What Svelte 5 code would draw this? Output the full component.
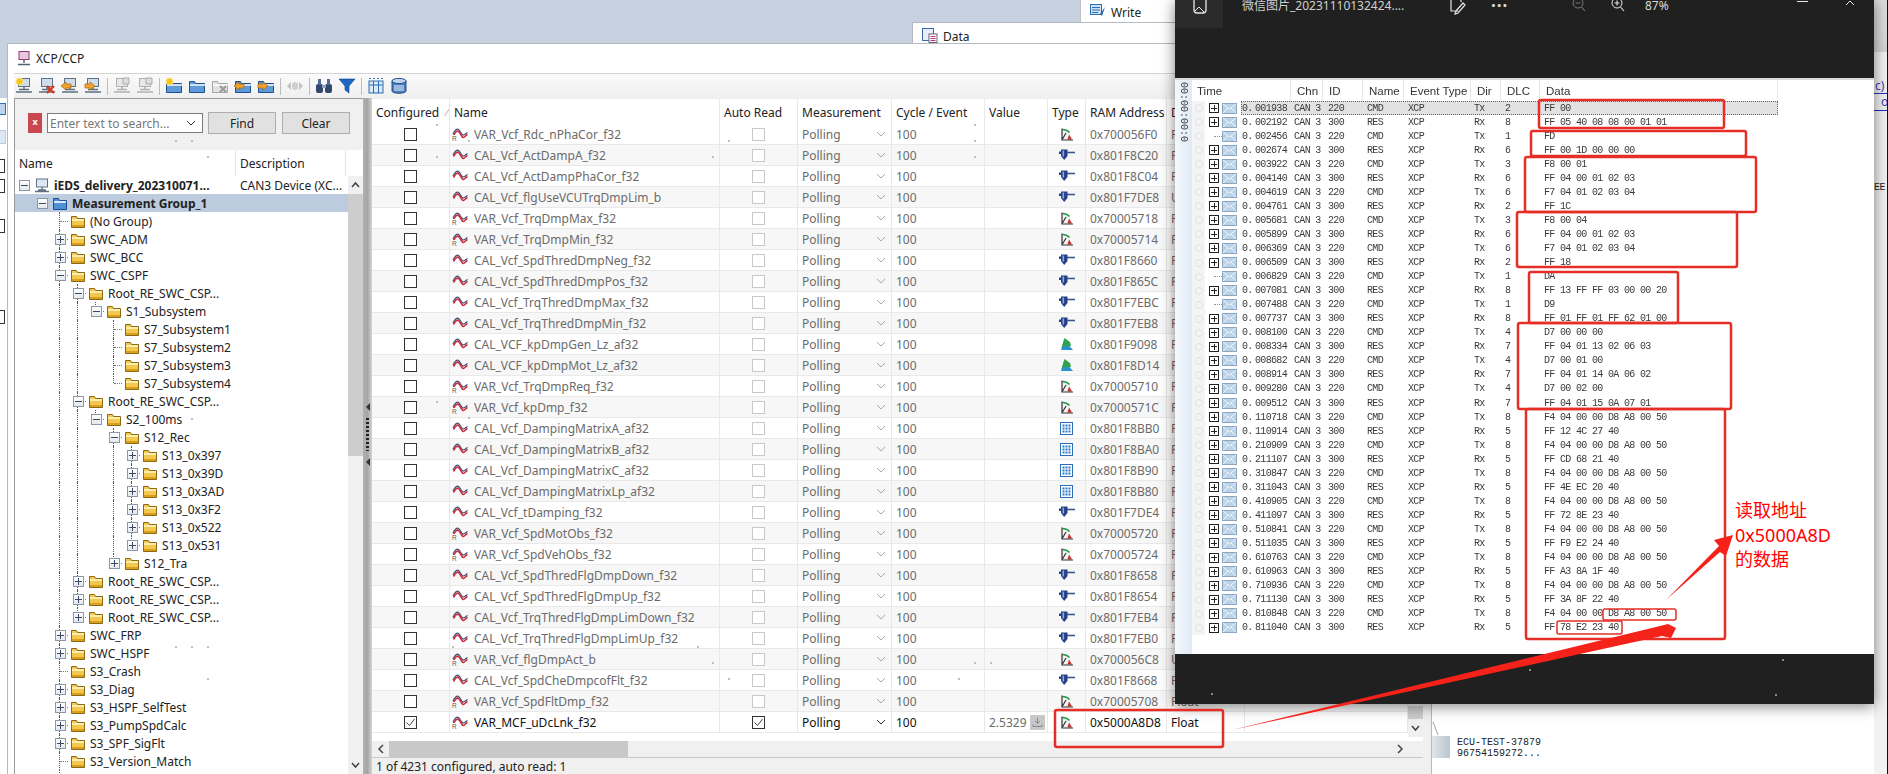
<script lang="ts">
	// tree on the left: [label, depth, expander]
	const treeRaw: [string, number, string][] = [
		['iEDS_delivery_202310071...', 0, '-'],
		['Measurement Group_1', 1, '-'],
		['(No Group)', 2, ''],
		['SWC_ADM', 2, '+'],
		['SWC_BCC', 2, '+'],
		['SWC_CSPF', 2, '-'],
		['Root_RE_SWC_CSP...', 3, '-'],
		['S1_Subsystem', 4, '-'],
		['S7_Subsystem1', 5, ''],
		['S7_Subsystem2', 5, ''],
		['S7_Subsystem3', 5, ''],
		['S7_Subsystem4', 5, ''],
		['Root_RE_SWC_CSP...', 3, '-'],
		['S2_100ms', 4, '-'],
		['S12_Rec', 5, '-'],
		['S13_0x397', 6, '+'],
		['S13_0x39D', 6, '+'],
		['S13_0x3AD', 6, '+'],
		['S13_0x3F2', 6, '+'],
		['S13_0x522', 6, '+'],
		['S13_0x531', 6, '+'],
		['S12_Tra', 5, '+'],
		['Root_RE_SWC_CSP...', 3, '+'],
		['Root_RE_SWC_CSP...', 3, '+'],
		['Root_RE_SWC_CSP...', 3, '+'],
		['SWC_FRP', 2, '+'],
		['SWC_HSPF', 2, '+'],
		['S3_Crash', 2, ''],
		['S3_Diag', 2, '+'],
		['S3_HSPF_SelfTest', 2, '+'],
		['S3_PumpSpdCalc', 2, '+'],
		['S3_SPF_SigFlt', 2, '+'],
		['S3_Version_Match', 2, ''],
		['', 2, '']
	];

	function hasNext(i: number, level: number) {
		for (let j = i + 1; j < treeRaw.length; j++) {
			if (treeRaw[j][1] < level) return false;
			if (treeRaw[j][1] === level) return true;
		}
		return false;
	}

	const tree = treeRaw.map(([label, depth, exp], i) => ({
		label,
		depth,
		exp,
		levels: Array.from({ length: depth }, (_, l) => l >= 2 && hasNext(i, l)),
		next: depth >= 2 && hasNext(i, depth)
	}));

	const signals: [string, string, string][] = [
		['VAR_Vcf_Rdc_nPhaCor_f32', '0x700056F0', 'Float'],
		['CAL_Vcf_ActDampA_f32', '0x801F8C20', 'Float'],
		['CAL_Vcf_ActDampPhaCor_f32', '0x801F8C04', 'Float'],
		['CAL_Vcf_flgUseVCUTrqDmpLim_b', '0x801F7DE8', 'UByte'],
		['VAR_Vcf_TrqDmpMax_f32', '0x70005718', 'Float'],
		['VAR_Vcf_TrqDmpMin_f32', '0x70005714', 'Float'],
		['CAL_Vcf_SpdThredDmpNeg_f32', '0x801F8660', 'Float'],
		['CAL_Vcf_SpdThredDmpPos_f32', '0x801F865C', 'Float'],
		['CAL_Vcf_TrqThredDmpMax_f32', '0x801F7EBC', 'Float'],
		['CAL_Vcf_TrqThredDmpMin_f32', '0x801F7EB8', 'Float'],
		['CAL_VCF_kpDmpGen_Lz_af32', '0x801F9098', 'Float'],
		['CAL_VCF_kpDmpMot_Lz_af32', '0x801F8D14', 'Float'],
		['VAR_Vcf_TrqDmpReq_f32', '0x70005710', 'Float'],
		['VAR_Vcf_kpDmp_f32', '0x7000571C', 'Float'],
		['CAL_Vcf_DampingMatrixA_af32', '0x801F8BB0', 'Float'],
		['CAL_Vcf_DampingMatrixB_af32', '0x801F8BA0', 'Float'],
		['CAL_Vcf_DampingMatrixC_af32', '0x801F8B90', 'Float'],
		['CAL_Vcf_DampingMatrixLp_af32', '0x801F8B80', 'Float'],
		['CAL_Vcf_tDamping_f32', '0x801F7DE4', 'Float'],
		['VAR_Vcf_SpdMotObs_f32', '0x70005720', 'Float'],
		['VAR_Vcf_SpdVehObs_f32', '0x70005724', 'Float'],
		['CAL_Vcf_SpdThredFlgDmpDown_f32', '0x801F8658', 'Float'],
		['CAL_Vcf_SpdThredFlgDmpUp_f32', '0x801F8654', 'Float'],
		['CAL_Vcf_TrqThredFlgDmpLimDown_f32', '0x801F7EB4', 'Float'],
		['CAL_Vcf_TrqThredFlgDmpLimUp_f32', '0x801F7EB0', 'Float'],
		['VAR_Vcf_flgDmpAct_b', '0x700056C8', 'UByte'],
		['CAL_Vcf_SpdCheDmpcofFlt_f32', '0x801F8668', 'Float'],
		['VAR_Vcf_SpdFltDmp_f32', '0x70005708', 'Float'],
		['VAR_MCF_uDcLnk_f32', '0x5000A8D8', 'Float']
	];

	function typeOf(name: string) {
		if (name.startsWith('VAR')) return 'gauge';
		if (name.includes('_Lz_')) return 'map';
		if (name.includes('Matrix')) return 'matrix';
		return 'pin';
	}

	// trace picture rows: time, dlc, data, has expander. Requests and replies alternate.
	const read = 'F4 04 00 00 D8 A8 00 50';
	const trace: [string, number, string, boolean?][] = [
		['001938', 2, 'FF 00'],
		['002192', 8, 'FF 05 40 08 08 00 01 01'],
		['002456', 1, 'FD', false],
		['002674', 6, 'FF 00 1D 00 00 00'],
		['003922', 3, 'F8 00 01'],
		['004140', 6, 'FF 04 00 01 02 03'],
		['004619', 6, 'F7 04 01 02 03 04'],
		['004761', 2, 'FF 1C'],
		['005681', 3, 'F8 00 04'],
		['005899', 6, 'FF 04 00 01 02 03'],
		['006369', 6, 'F7 04 01 02 03 04'],
		['006509', 2, 'FF 18'],
		['006829', 1, 'DA', false],
		['007081', 8, 'FF 13 FF FF 03 00 00 20'],
		['007488', 1, 'D9', false],
		['007737', 8, 'FF 01 FF 01 FF 62 01 00'],
		['008100', 4, 'D7 00 00 00'],
		['008334', 7, 'FF 04 01 13 02 06 03'],
		['008682', 4, 'D7 00 01 00'],
		['008914', 7, 'FF 04 01 14 0A 06 02'],
		['009280', 4, 'D7 00 02 00'],
		['009512', 7, 'FF 04 01 15 0A 07 01'],
		['110718', 8, read],
		['110914', 5, 'FF 12 4C 27 40'],
		['210909', 8, read],
		['211107', 5, 'FF CD 68 21 40'],
		['310847', 8, read],
		['311043', 5, 'FF 4E EC 20 40'],
		['410905', 8, read],
		['411097', 5, 'FF 72 8E 23 40'],
		['510841', 8, read],
		['511035', 5, 'FF F9 E2 24 40'],
		['610763', 8, read],
		['610963', 5, 'FF A3 8A 1F 40'],
		['710936', 8, read],
		['711130', 5, 'FF 3A 8F 22 40'],
		['810848', 8, read],
		['811040', 5, 'FF 78 E2 23 40']
	];

	// x, y, w, h of the hand drawn boxes
	const boxes = [
		[1539, 100, 185, 28],
		[1531, 131, 215, 25],
		[1525, 157, 231, 55],
		[1517, 212, 220, 55],
		[1529, 272, 149, 51],
		[1518, 323, 213, 86],
		[1526, 409, 199, 230],
		[1603, 609, 73, 11],
		[1557, 621, 65, 13],
		[1055, 710, 168, 37]
	];

	// stray specks that the screenshot carries
	const specks = [
		[437, 125], [437, 157], [176, 141], [192, 141], [208, 157], [469, 141], [729, 141], [713, 157],
		[192, 419], [437, 402], [469, 418], [176, 647], [192, 647], [208, 647], [208, 679],
		[975, 125], [975, 141], [975, 157], [453, 647], [698, 647], [713, 663], [729, 679],
		[975, 663], [991, 663], [959, 679], [1212, 694], [1530, 670], [1776, 695], [1783, 660]
	];

	const toolbar = [
		['new-net', 'del-net', 'in-net', 'out-net'],
		['dim-net', 'dim-net'],
		['new-folder', 'folder', 'del-folder', 'in-folder', 'out-folder'],
		['dim-arrow'],
		['find', 'funnel'],
		['columns', 'db']
	];
</script>

{#snippet chevron(dark: boolean)}
	<svg class="chev" width="10" height="6" viewBox="0 0 10 6"><path d="M1 1l4 4 4-4" fill="none" stroke={dark ? '#333' : '#a8a8a8'} stroke-width="1" /></svg>
{/snippet}

{#snippet folderIcon()}
	<svg width="14" height="13" viewBox="0 0 14 13">
		<path d="M.5 12.500V1.500h5l1 2h7v9z" fill="#f4c84f" stroke="#8a6a14" />
		<path d="M1 4h12v2H1z" fill="#fdeeb0" />
		<path d="M1 10h12v2H1z" fill="#d99e1c" />
	</svg>
{/snippet}

{#snippet netShape(body: string, edge: string)}
	<rect x="3.500" y="1.500" width="11" height="8" fill={body} stroke={edge} />
	<path d="M9 9.500v3M1 15h16M4 12.500h10" stroke={edge} stroke-width="1.500" />
{/snippet}

{#snippet folderShape(body: string, edge: string)}
	<path d="M1.500 15.500V4.500h5l1 2h9v9z" fill={body} stroke={edge} />
	<path d="M2 7h15v2H2z" fill="#fff" opacity=".7" />
{/snippet}

{#snippet tool(kind: string)}
	<svg class="tool" width="18" height="18" viewBox="0 0 18 18">
		{#if kind.endsWith('net')}
			{#if kind === 'dim-net'}
				{@render netShape('#e8e8e8', '#b0b0b0')}
				<path d="M10 1h6v6h-6z" fill="#ddd" stroke="#aaa" />
			{:else}
				{@render netShape('#cfdcea', '#5f7284')}
			{/if}
		{:else if kind.endsWith('folder') || kind === 'folder'}
			{#if kind === 'del-folder'}
				{@render folderShape('#e2e2e2', '#a6a6a6')}
			{:else}
				{@render folderShape('#5f9bd8', '#1e4f8c')}
			{/if}
		{/if}
		{#if kind.startsWith('new')}
			<circle cx="4.500" cy="4.500" r="3.500" fill="#f7c516" stroke="#fbe58a" />
		{:else if kind === 'del-net'}
			<path d="M9 9l7 7m0-7l-7 7" stroke="#d8391f" stroke-width="2.400" />
		{:else if kind === 'del-folder'}
			<path d="M9 9l6 6m0-6l-6 6" stroke="#9a9a9a" stroke-width="2" />
		{:else if kind.startsWith('in')}
			<path d="M0 9l5-4v2h5v4H5v2z" fill="#f1a32e" stroke="#a8660a" stroke-width=".7" />
		{:else if kind.startsWith('out')}
			<path d="M11 9L6 5v2H1v4h5v2z" fill="#f1a32e" stroke="#a8660a" stroke-width=".7" />
		{:else if kind === 'dim-arrow'}
			<path d="M1 9l4-4v8zM17 9l-4-4v8z" fill="#c4c4c4" /><rect x="6" y="5" width="6" height="8" rx="3" fill="#d0d0d0" />
		{:else if kind === 'find'}
			<rect x="1" y="7" width="7" height="9" rx="2" fill="#30476b" />
			<rect x="10" y="7" width="7" height="9" rx="2" fill="#30476b" />
			<rect x="3" y="2" width="3" height="6" fill="#4f6a94" />
			<rect x="12" y="2" width="3" height="6" fill="#4f6a94" />
			<rect x="7" y="8" width="4" height="3" fill="#8fa4c4" />
		{:else if kind === 'funnel'}
			<path d="M1 2h16l-6 7v7l-4-3V9z" fill="#1c68c4" stroke="#0e3f80" stroke-width=".6" />
		{:else if kind === 'columns'}
			<rect x="2" y="4" width="14" height="12" fill="#dce9f7" stroke="#2f6fb4" />
			<path d="M6.500 4v12M11.500 4v12M2 8h14" stroke="#2f6fb4" />
			<path d="M2 1.500h14" stroke="#2f6fb4" stroke-dasharray="2 2" />
		{:else if kind === 'db'}
			<path d="M2 4v10c0 3 14 3 14 0V4z" fill="#4a7fbd" stroke="#234f88" />
			<ellipse cx="9" cy="4" rx="7" ry="2.600" fill="#bcd5ee" stroke="#234f88" />
			<rect x="4" y="8" width="10" height="6" fill="#cfe0f2" opacity=".6" />
		{/if}
	</svg>
{/snippet}

{#snippet wave(isVar: boolean)}
	<svg class="wave" width="16" height="14" viewBox="0 0 16 14">
		<path d="M1 7C3 3 5 1 7 3s3 5.500 4.500 5 3-2 4-2.500" fill="none" stroke="#3e4f72" stroke-width="1.200" />
		<path d="M1.500 8.500C3.500 5 5 3 7 5s3 6 4.500 5.500 2.500-2.500 4-3" fill="none" stroke="#c9303f" stroke-width="1.700" />
		{#if isVar}
			<rect x="0" y="8" width="4.500" height="6" fill="#fff" opacity=".9" />
			<text x="0" y="13.500" font-size="6.500" fill="#555" font-family="Liberation Sans, sans-serif">R</text>
		{/if}
	</svg>
{/snippet}

{#snippet typeIcon(kind: string)}
	{#if kind === 'gauge'}
		<svg width="14" height="14" viewBox="0 0 14 14">
			<path d="M2 12.500V2.500a10 10 0 0 1 10 10z" fill="#f4f4f4" />
			<path d="M2.500 2.500a10 10 0 0 1 7 3" fill="none" stroke="#2b9a4a" stroke-width="1.500" />
			<path d="M7.500 12.500l1.500-5 3 5z" fill="#c92c2c" />
			<path d="M2 1.500v11.500h11M2.500 12l3.500-6" fill="none" stroke="#333" stroke-width="1.200" />
		</svg>
	{:else if kind === 'pin'}
		<svg width="16" height="12" viewBox="0 0 16 12">
			<path d="M8 3.500h8" stroke="#3b5a8a" stroke-width="1.600" />
			<path d="M2 .500h6.500v6.500L5.200 11 2 7zM0 2.500h2v2.500H0z" fill="#24408a" />
			<path d="M3.500 1.500h1.600v6H3.500z" fill="#93abd8" />
		</svg>
	{:else if kind === 'map'}
		<svg width="14" height="14" viewBox="0 0 14 14">
			<path d="M1 13L4 3l9 10z" fill="#2b8fd0" />
			<path d="M1.500 11L4.500 1 10 5l1 4-6 0z" fill="#2ea34c" />
		</svg>
	{:else}
		<svg width="13" height="13" viewBox="0 0 13 13">
			<rect x=".5" y=".5" width="12" height="12" fill="#fff" stroke="#2a6fb5" />
			{#each [2.500, 5.500, 8.500] as y}
				{#each [2.500, 5.500, 8.500] as x}
					<rect {x} {y} width="2" height="2" fill="#2a7ac8" />
				{/each}
			{/each}
		</svg>
	{/if}
{/snippet}

<div class="screen">
	<div class="tabband">
		<div class="tab write">
			<svg width="16" height="14" viewBox="0 0 16 14"><rect x=".5" y=".5" width="11" height="10" fill="#cfe0f4" stroke="#2f6fb4" /><path d="M2 3.500h8M2 6h8M2 8.500h6" stroke="#2f6fb4" /><path d="M15 3l-3 9-2-2z" fill="#2c62a8" /></svg>
			Write
		</div>
		<div class="tab data">
			<svg width="16" height="15" viewBox="0 0 16 15"><rect x=".5" y=".5" width="11" height="12" fill="#e6eefa" stroke="#3a6aa8" /><rect x="7" y="6" width="8" height="8.500" fill="#fff" stroke="#666" /><path d="M8.500 8.500h5M8.500 10.500h5M8.500 12.500h5" stroke="#c2308e" /></svg>
			Data
		</div>
	</div>

	<div class="desk">
		<div class="behind">
			<i class="chip"></i>
			<i class="chip pale"></i>
			<b class="mark m1"></b>
			<b class="mark m2"></b>
			<b class="mark m3"></b>
			<b class="mark m4"></b>
		</div>

		<div class="win">
			<div class="wintitle">
				<svg width="14" height="15" viewBox="0 0 14 15"><rect x="2" y=".5" width="10" height="8" fill="#e7c8dc" stroke="#8f3a6c" /><path d="M7 9v3M1 13.500h12" stroke="#506070" stroke-width="1.400" /></svg>
				XCP/CCP
			</div>
			<div class="toolbar">
				{#each toolbar as group, g}
					{#if g > 0}<span class="sep"></span>{/if}
					{#each group as kind}
						{@render tool(kind)}
					{/each}
				{/each}
			</div>

			<div class="panes">
				<section class="left">
					<div class="search">
						<span class="xbtn">x</span>
						<div class="input"><span>Enter text to search...</span>{@render chevron(true)}</div>
						<button class="btn">Find</button>
						<button class="btn">Clear</button>
					</div>
					<div class="treehead">
						<span class="h-name">Name</span>
						<span class="h-desc">Description</span>
					</div>
					<div class="treewrap">
						<div class="tree">
							{#each tree as row, i}
								<div class="node" class:sel={i === 1} class:strong={i < 2}>
									{#each row.levels as on}
										<span class="cell" class:line={on}></span>
									{/each}
									<span class="cell" class:twig={row.depth >= 2} class:last={!row.next}>
										{#if row.exp}
											<span class="box">
												<i class="h"></i>
												{#if row.exp === '+'}<i class="v"></i>{/if}
											</span>
										{/if}
									</span>
									<span class="nodeicon">
										{#if row.depth === 0}
											<svg width="16" height="15" viewBox="0 0 16 15"><rect x="2.500" y="1" width="11" height="8" fill="#dfe8f2" stroke="#5f7284" /><path d="M8 9v3M1 13.500h14M4 12h8" stroke="#5f7284" stroke-width="1.400" /></svg>
										{:else if row.depth === 1}
											<svg width="14" height="13" viewBox="0 0 14 13"><path d="M.5 12.500V1.500h5l1 2h7v9z" fill="#4e90d6" stroke="#1e4f8c" /><path d="M1 4h12v2H1z" fill="#d8e8f8" /></svg>
										{:else}
											{@render folderIcon()}
										{/if}
									</span>
									<span class="label">{row.label}</span>
									{#if i === 0}<span class="desc">CAN3 Device (XC...</span>{/if}
								</div>
							{/each}
						</div>
						<div class="vbar">
							<svg width="15" height="18" viewBox="0 0 15 18"><path d="M4 11l3.500-4 3.500 4" fill="none" stroke="#444" stroke-width="1.500" /></svg>
							<div class="thumb"></div>
							<svg class="down" width="15" height="18" viewBox="0 0 15 18"><path d="M4 7l3.500 4 3.500-4" fill="none" stroke="#444" stroke-width="1.500" /></svg>
						</div>
					</div>
				</section>

				<div class="split">
					<i class="tri"></i>
					<i class="grip"></i>
					<i class="tri"></i>
				</div>

				<section class="grid">
					<div class="head cols">
						<span>Configured<em>⁄</em></span>
						<span>Name</span>
						<span>Auto Read</span>
						<span>Measurement</span>
						<span>Cycle / Event</span>
						<span>Value</span>
						<span>Type</span>
						<span>RAM Address</span>
						<span>Data Type</span>
						<span></span>
					</div>
					<div class="gridbody">
						<div class="rows">
							{#each signals as [name, addr, dtype], i}
								{@const on = i === signals.length - 1}
								<div class="row cols" class:alt={i % 2 === 1} class:on>
									<span class="c-check"><i class="check">{#if on}<svg width="13" height="13" viewBox="0 0 13 13"><path d="M2.500 6.500l3 3 5-6.500" fill="none" stroke="#444" /></svg>{/if}</i></span>
									<span class="c-name">{@render wave(name.startsWith('VAR'))}<span>{name}</span></span>
									<span class="c-check"><i class="check soft">{#if on}<svg width="13" height="13" viewBox="0 0 13 13"><path d="M2.500 6.500l3 3 5-6.500" fill="none" stroke="#444" /></svg>{/if}</i></span>
									<span class="c-poll"><span>Polling</span>{@render chevron(on)}</span>
									<span class="c-num"><span>100</span></span>
									<span class="c-val">
										{#if on}
											<span>2.5329</span>
											<i class="dl"><svg width="11" height="11" viewBox="0 0 11 11"><path d="M5.500 1v5M3 4l2.500 2.500L8 4M1 7.500v2h9v-2" fill="none" stroke="#8a8a8a" /></svg></i>
										{/if}
									</span>
									<span class="c-type">{@render typeIcon(typeOf(name))}</span>
									<span class="c-addr"><span>{addr}</span></span>
									<span class="c-dt"><span>{dtype}</span></span>
									<span></span>
								</div>
							{/each}
						</div>
						<div class="vbar small">
							<div class="thumb2"></div>
							<svg width="15" height="18" viewBox="0 0 15 18"><path d="M4 7l3.500 4 3.500-4" fill="none" stroke="#444" stroke-width="1.500" /></svg>
						</div>
					</div>
					<div class="hbar">
						<svg width="15" height="16" viewBox="0 0 15 16"><path d="M9 4L5 8l4 4" fill="none" stroke="#444" stroke-width="1.500" /></svg>
						<div class="hthumb"></div>
						<svg class="end" width="15" height="16" viewBox="0 0 15 16"><path d="M6 4l4 4-4 4" fill="none" stroke="#444" stroke-width="1.500" /></svg>
					</div>
					<div class="status">1 of 4231 configured, auto read: 1</div>
				</section>

				<section class="side">
					<div class="doc">
						<i class="docicon"></i>
						<span>ECU-TEST-37879<br />96754159272...</span>
					</div>
				</section>
			</div>
		</div>
	</div>

	<div class="edge">
		<div class="edge-link">c)</div>
		<div class="edge-link second">o</div>
		<div class="edge-ee">EE</div>
	</div>

	<div class="viewer">
		<div class="vtop">
			<div class="vtab">
				<svg width="16" height="14" viewBox="0 0 16 14"><path d="M3 0v10a3 3 0 0 0 3 3h6a3 3 0 0 0 3-3V0" fill="none" stroke="#e6e6e6" stroke-width="1.300" /><path d="M4 11l4-4 5 5" fill="none" stroke="#e6e6e6" /></svg>
			</div>
			<span class="vname">微信图片_20231110132424....</span>
			<svg class="v-edit" width="20" height="16" viewBox="0 0 20 16"><path d="M3 0v11h7M13 0v2M8 11l7-8 2 2-7 8-3 1z" fill="none" stroke="#e6e6e6" stroke-width="1.200" /></svg>
			<span class="vdots">···</span>
			<svg class="v-zoomout" width="14" height="14" viewBox="0 0 14 14"><circle cx="6" cy="3" r="5" fill="none" stroke="#777" /><path d="M3.500 3h5M9.500 7l3.500 4" stroke="#777" stroke-width="1.100" /></svg>
			<svg class="v-zoomin" width="14" height="14" viewBox="0 0 14 14"><circle cx="6" cy="3" r="5" fill="none" stroke="#e6e6e6" /><path d="M3.500 3h5M6 .5v5M9.500 7l3.500 4" stroke="#e6e6e6" stroke-width="1.100" /></svg>
			<span class="vpct">87%</span>
			<i class="vmin"></i>
			<svg class="v-close" width="10" height="6" viewBox="0 0 10 6"><path d="M1 5l4-4 4 4" fill="none" stroke="#e6e6e6" /></svg>
		</div>
		<div class="shot">
			<div class="rail"><span>00:00:00:0</span></div>
			<div class="tracepane">
				<div class="tracehead">
					<span class="t-time">Time</span>
					<span>Chn</span>
					<span>ID</span>
					<span>Name</span>
					<span>Event Type</span>
					<span>Dir</span>
					<span>DLC</span>
					<span>Data</span>
				</div>
				<div class="tracebody">
					{#each trace as [time, dlc, data, exp], i}
						{@const isCmd = i % 2 === 0}
						<div class="trow" class:first={i === 0}>
							<span class="bubble"><i></i></span>
							<span class="tx">{#if exp !== false}<i class="tbox"></i>{:else}<i class="tdash"></i>{/if}</span>
							<svg class="env" width="15" height="11" viewBox="0 0 15 11"><rect x=".5" y=".5" width="14" height="10" fill="#bcd2e6" stroke="#8aa6c2" /><path d="M1 1l6.500 5L14 1M1 10l5-5M14 10L9 5" fill="none" stroke="#eef4fa" /></svg>
							<span class="tt">0. {time}</span>
							<span>CAN 3</span>
							<span>{isCmd ? '220' : '300'}</span>
							<span>{isCmd ? 'CMD' : 'RES'}</span>
							<span>XCP</span>
							<span>{isCmd ? 'Tx' : 'Rx'}</span>
							<span>{dlc}</span>
							<span class="bytes">{data}</span>
						</div>
					{/each}
				</div>
			</div>
		</div>
		<div class="note">
			<span>读取地址</span>
			<span>0x5000A8D</span>
			<span>的数据</span>
		</div>
	</div>

	<svg class="marks" width="1888" height="774" viewBox="0 0 1888 774">
		{#each boxes as [x, y, w, h], i}
			<rect {x} {y} width={w} height={h} rx="2" fill="none" stroke="#e52e26" stroke-width={i === 7 || i === 8 ? 1.500 : 2.500} />
		{/each}
		<path d="M1666 600l54-48 6 4 7-21-19 5 5 6z" fill="#f5221a" />
		<path d="M1232 730L1660 626l8-2 8 4-5 10-9-2z" fill="#f5221a" />
		<path d="M1433 722l5 13" stroke="#777" stroke-width=".7" fill="none" />
		{#each specks as [cx, cy]}
			<circle {cx} {cy} r="1" fill="#aaa" />
		{/each}
	</svg>
</div>

<style>
	:global(body) {
		margin: 0;
		background: #fff;
	}

	.screen {
		position: relative;
		display: flex;
		flex-direction: column;
		width: 1888px;
		height: 774px;
		overflow: hidden;
		background: #c8d1e0;
		font-family: "Noto Sans", "Noto Sans CJK SC", sans-serif;
		font-size: 12px;
		color: #222;
	}

	.tabband {
		height: 43px;
		flex: none;
		padding-left: 912px;
		box-sizing: border-box;
	}

	.tab {
		display: flex;
		gap: 5px;
		background: #fff;
		box-sizing: border-box;
	}

	.tab.write {
		width: 200px;
		height: 22px;
		margin-left: 168px;
		padding: 4px 0 0 9px;
		border-left: 1px solid #c0c0c0;
	}

	.tab.data {
		width: 400px;
		height: 21px;
		padding: 5px 0 0 9px;
		border: 1px solid #b4b8c0;
		border-bottom: 0;
	}

	.desk {
		flex: 1;
		min-height: 0;
		display: flex;
	}

	.behind {
		width: 7px;
		flex: none;
		display: flex;
		flex-direction: column;
		background: #fff;
		margin-top: 55px;
		align-items: flex-start;
	}

	.chip {
		display: block;
		width: 6px;
		height: 12px;
		margin-top: 5px;
		background: #bcd4f0;
		border: 1px solid #2f6fb4;
		border-left: 0;
		box-sizing: border-box;
	}

	.chip.pale {
		margin-top: 15px;
		height: 14px;
		background: #dce8f4;
		border-color: #b4cce4;
	}

	.mark {
		display: block;
		width: 5px;
		height: 14px;
		border: 1px solid #333;
		border-left: 0;
		box-sizing: border-box;
	}

	.m1 {
		margin-top: 15px;
	}

	.m2 {
		margin-top: 6px;
	}

	.m3 {
		margin-top: 26px;
	}

	.m4 {
		margin-top: 77px;
	}

	.win {
		flex: 1;
		min-width: 0;
		display: flex;
		flex-direction: column;
		background: #fff;
		border-left: 1px solid #b8b8b8;
		border-top: 1px solid #b4b8c0;
	}

	.wintitle {
		height: 29px;
		flex: none;
		display: flex;
		align-items: center;
		gap: 5px;
		padding-left: 9px;
		box-sizing: border-box;
	}

	.toolbar {
		height: 25px;
		flex: none;
		display: flex;
		align-items: center;
		gap: 5px;
		margin-left: 6px;
		padding-left: 1px;
		background: linear-gradient(#fafafa, #f0f0f0);
		border-top: 1px solid #d4d4d4;
		box-sizing: border-box;
	}

	.tool {
		flex: none;
	}

	.sep {
		width: 1px;
		height: 17px;
		background: #bdbdbd;
	}

	.panes {
		flex: 1;
		min-height: 0;
		display: flex;
		margin-left: 6px;
		background: #f0f0f0;
	}

	.left {
		width: 349px;
		flex: none;
		display: flex;
		flex-direction: column;
		border-left: 1px solid #9a9a9a;
		border-top: 1px solid #9a9a9a;
		box-sizing: border-box;
		background: #fff;
	}

	.search {
		height: 51px;
		flex: none;
		display: flex;
		align-items: flex-start;
		gap: 5px;
		padding: 13px 0 0 13px;
		box-sizing: border-box;
		background: #f0f0f0;
	}

	.xbtn {
		width: 14px;
		height: 20px;
		margin-top: 1px;
		background: #c9484f;
		color: #fff;
		font-size: 9px;
		font-weight: 700;
		text-align: center;
		line-height: 18px;
	}

	.input {
		width: 156px;
		height: 20px;
		margin-top: 1px;
		display: flex;
		align-items: center;
		justify-content: space-between;
		padding: 0 6px 0 2px;
		box-sizing: border-box;
		border: 1px solid #7a7a7a;
		background: #fff;
		color: #777;
	}

	.input .chev {
		flex: none;
	}

	.btn {
		width: 68px;
		height: 22px;
		padding: 0;
		border: 1px solid #adadad;
		background: #e1e1e1;
		font: inherit;
		color: #222;
	}

	.btn + .btn {
		margin-left: 1px;
	}

	.treehead {
		height: 26px;
		flex: none;
		display: flex;
		align-items: center;
	}

	.h-name {
		width: 216px;
		height: 100%;
		display: flex;
		align-items: center;
		padding-left: 4px;
		border-right: 1px solid #e4e4e4;
	}

	.h-desc {
		width: 105px;
		height: 100%;
		display: flex;
		align-items: center;
		padding-left: 4px;
		border-right: 1px solid #e4e4e4;
	}

	.treewrap {
		flex: 1;
		min-height: 0;
		display: flex;
	}

	.tree {
		position: relative;
		width: 333px;
		flex: none;
		overflow: hidden;
	}

	.node {
		height: 18px;
		display: flex;
		align-items: center;
		white-space: nowrap;
	}

	.node.sel {
		background: #bccbdd;
	}

	.node.strong .label {
		font-weight: 700;
	}

	.cell {
		position: relative;
		width: 18px;
		height: 18px;
		flex: none;
	}

	.cell.line::before,
	.twig::before {
		content: "";
		position: absolute;
		left: 8px;
		top: 0;
		bottom: 0;
		border-left: 1px dotted #555;
	}

	.twig.last::before {
		bottom: 9px;
	}

	.twig::after {
		content: "";
		position: absolute;
		left: 9px;
		width: 8px;
		top: 9px;
		border-top: 1px dotted #777;
	}

	.box {
		position: absolute;
		left: 4px;
		top: 4px;
		width: 9px;
		height: 9px;
		z-index: 1;
		border: 1px solid #8b98a8;
		background: linear-gradient(#fff, #e4e8ec);
	}

	.box .h {
		position: absolute;
		left: 1px;
		right: 1px;
		top: 4px;
		height: 1px;
		background: #3a4a66;
	}

	.box .v {
		position: absolute;
		top: 1px;
		bottom: 1px;
		left: 4px;
		width: 1px;
		background: #3a4a66;
	}

	.nodeicon {
		width: 18px;
		flex: none;
		display: flex;
		justify-content: center;
	}

	.label {
		margin-left: 3px;
	}

	.desc {
		position: absolute;
		left: 225px;
	}

	.vbar {
		flex: 1;
		display: flex;
		flex-direction: column;
		background: #f0f0f0;
	}

	.vbar .thumb {
		height: 262px;
		background: #cdcdcd;
	}

	.vbar .down {
		margin-top: auto;
	}

	.split {
		width: 9px;
		flex: none;
		display: flex;
		flex-direction: column;
		align-items: center;
		gap: 7px;
		padding-top: 305px;
		box-sizing: border-box;
		background: linear-gradient(90deg, #b0b0b0, #a6a6a6 50%, #d4d4d4);
	}

	.tri {
		width: 0;
		height: 0;
		border-top: 4px solid transparent;
		border-bottom: 4px solid transparent;
		border-right: 4px solid #333;
	}

	.grip {
		width: 3px;
		height: 33px;
		background: repeating-linear-gradient(#222 0 2px, transparent 2px 4px);
	}

	.grid {
		width: 1051px;
		flex: none;
		display: flex;
		flex-direction: column;
		background: #fff;
		border-top: 1px solid #eee;
		box-sizing: border-box;
	}

	.cols {
		display: grid;
		grid-template-columns: 78px 270px 78px 94px 93px 63px 38px 81px 78px 163px;
	}

	.head {
		height: 25px;
		flex: none;
		align-items: stretch;
	}

	.head span {
		display: flex;
		align-items: center;
		padding: 2px 0 0 4px;
		border-right: 1px solid #e8e8e8;
		white-space: nowrap;
		overflow: hidden;
		box-sizing: border-box;
	}

	.head em {
		margin-left: 7px;
		font-size: 9px;
		color: #999;
	}

	.gridbody {
		height: 613px;
		flex: none;
		display: flex;
	}

	.rows {
		width: 1036px;
		flex: none;
	}

	.row {
		height: 21px;
		align-items: stretch;
		box-sizing: border-box;
		border-bottom: 1px solid #e9e9e9;
		color: #6b6b6b;
		white-space: nowrap;
	}

	.row.alt {
		background: #f7f7f7;
	}

	.row.on {
		color: #111;
	}

	.row > span {
		display: flex;
		align-items: center;
		border-right: 1px solid #e8e8e8;
		box-sizing: border-box;
		overflow: hidden;
	}

	/* the captions sit a pixel under the middle of a row */
	.row > span > span {
		padding-top: 1px;
	}

	.c-check {
		justify-content: center;
	}

	.check {
		display: block;
		width: 13px;
		height: 13px;
		border: 1px solid #333;
		background: #fff;
		box-sizing: border-box;
	}

	.check svg {
		display: block;
		margin: -1px;
	}

	.check.soft {
		border-color: #c8c8c8;
	}

	.row.on .check.soft {
		border-color: #333;
	}

	.row > .c-name {
		gap: 6px;
		padding-left: 2px;
	}

	.wave {
		flex: none;
	}

	.row > .c-poll {
		justify-content: space-between;
		padding: 0 5px 0 4px;
	}

	.row > .c-num,
	.row > .c-val,
	.row > .c-addr,
	.row > .c-dt {
		padding-left: 4px;
	}

	.row > .c-val {
		justify-content: space-between;
		padding-right: 2px;
		color: #6b6b6b;
	}

	.dl {
		display: flex;
		align-items: center;
		justify-content: center;
		width: 15px;
		height: 15px;
		background: #c8c8c8;
	}

	.row > .c-type {
		justify-content: center;
	}

	.vbar.small {
		width: 15px;
		flex: none;
		justify-content: flex-end;
	}

	.thumb2 {
		height: 13px;
		background: #cdcdcd;
	}

	.hbar {
		height: 16px;
		flex: none;
		margin-top: 4px;
		display: flex;
		align-items: center;
		background: #f0f0f0;
		border-bottom: 1px solid #c8c8c8;
	}

	.hbar svg {
		width: 15px;
		margin-left: 2px;
	}

	.hthumb {
		width: 239px;
		height: 100%;
		background: #c8c8c8;
	}

	.hbar .end {
		margin-left: auto;
		margin-right: 16px;
	}

	.status {
		flex: 1;
		display: flex;
		align-items: center;
		padding-left: 4px;
		background: #f0f0f0;
	}

	.side {
		flex: 1;
		min-width: 0;
		margin-left: 8px;
		padding-top: 638px;
		box-sizing: border-box;
		background: #fff;
		border-left: 1px solid #b8b8b8;
	}

	.doc {
		display: flex;
		align-items: flex-start;
		gap: 7px;
		font-family: "Liberation Mono", monospace;
		font-size: 10px;
		line-height: 11px;
		color: #222;
	}

	.doc span {
		padding-top: 1px;
	}

	.docicon {
		display: block;
		width: 18px;
		height: 22px;
		background: linear-gradient(90deg, #dfe6ec, #bac6d0);
	}

	/* sliver of another window right of the viewer */
	.edge {
		position: absolute;
		left: 1874px;
		top: 0;
		width: 14px;
		height: 774px;
		padding-top: 78px;
		box-sizing: border-box;
		overflow: hidden;
		background: linear-gradient(#dcdcdc 27px, #d4d4d4 52px, #f2f2f2 52px);
		border-right: 1px solid #111;
		color: #3a3ac0;
	}

	.edge-link {
		height: 16px;
		padding-left: 1px;
		font-size: 12px;
		line-height: 15px;
		border-bottom: 1px solid #2a2ac0;
		box-sizing: border-box;
	}

	.edge-link.second {
		height: 17px;
		padding-left: 7px;
	}

	.edge-ee {
		margin-top: 71px;
		font-family: "Liberation Mono", monospace;
		font-size: 10px;
		line-height: 12px;
		letter-spacing: -0.5px;
		color: #222;
	}

	/* photo viewer floating over the app */
	.viewer {
		position: absolute;
		left: 1175px;
		top: 0;
		width: 699px;
		height: 704px;
		display: flex;
		flex-direction: column;
		background: #202020;
		box-shadow: 0 2px 14px rgba(0, 0, 0, 0.5);
	}

	.vtop {
		height: 78px;
		flex: none;
		position: relative;
		color: #d8d8d8;
	}

	.vtab {
		position: absolute;
		left: 0;
		top: 0;
		width: 48px;
		height: 28px;
		padding-left: 16px;
		box-sizing: border-box;
		background: #2b2b2b;
	}

	.vname,
	.vpct,
	.vdots {
		position: absolute;
		top: 0;
		white-space: nowrap;
		line-height: 12px;
	}

	.vname {
		left: 67px;
		font-size: 12px;
		color: #d0d0d0;
	}

	.v-edit {
		position: absolute;
		left: 273px;
		top: 0;
	}

	.vdots {
		left: 316px;
		font-size: 17px;
		letter-spacing: 1px;
		font-weight: 700;
	}

	.v-zoomout {
		position: absolute;
		left: 397px;
		top: 0;
	}

	.v-zoomin {
		position: absolute;
		left: 436px;
		top: 0;
	}

	.vpct {
		left: 470px;
		font-size: 12px;
	}

	.vmin {
		position: absolute;
		left: 622px;
		top: 1px;
		width: 11px;
		height: 1px;
		background: #e6e6e6;
	}

	.v-close {
		position: absolute;
		left: 670px;
		top: 0;
	}

	.shot {
		height: 576px;
		flex: none;
		display: flex;
		background: #fff;
		overflow: hidden;
		border-top: 2px solid #dadada;
		box-sizing: border-box;
		filter: blur(0.35px);
	}

	.rail {
		width: 17px;
		flex: none;
		background: linear-gradient(90deg, #f4f8fc, #dfeaf6);
		display: flex;
		justify-content: center;
	}

	.rail span {
		writing-mode: vertical-rl;
		margin-top: 2px;
		font-size: 10px;
		font-family: "Liberation Mono", monospace;
		color: #333;
	}

	.tracepane {
		position: relative;
		flex: 1;
		min-width: 0;
	}

	.tracehead {
		height: 21px;
		display: grid;
		grid-template-columns: 99px 32px 40px 41px 67px 30px 39px 238px;
		align-items: center;
		width: 586px;
		font-family: "Liberation Sans", sans-serif;
		font-size: 11.500px;
		color: #333;
	}

	.tracehead span {
		height: 100%;
		display: flex;
		align-items: center;
		padding-left: 6px;
		border-right: 1px solid #e8e8e8;
		box-sizing: border-box;
	}

	.tracehead .t-time {
		padding-left: 5px;
	}

	.tracebody {
		font-family: "Liberation Mono", monospace;
		font-size: 10px;
		letter-spacing: -0.67px;
		color: #3a3a3a;
	}

	.trow {
		height: 14.050px;
		width: 681px;
		display: grid;
		grid-template-columns: 13px 17px 20px 52px 34px 39px 41px 66px 31px 39px 1fr;
		align-items: center;
		white-space: pre;
	}

	.trow.first::before {
		content: "";
		position: absolute;
		left: 49px;
		width: 537px;
		height: 14px;
		background: #e2e2e2;
		border: 1px dotted #666;
		box-sizing: border-box;
	}

	.trow > * {
		position: relative;
	}

	.bubble {
		height: 100%;
		display: flex;
		align-items: center;
		justify-content: center;
		background: #f4f4f4;
	}

	.bubble i {
		width: 6px;
		height: 6px;
		border: 1px solid #e2e2e2;
		border-radius: 50%;
	}

	.tx {
		display: flex;
		align-items: center;
		padding-left: 4px;
	}

	.tbox {
		display: block;
		width: 8px;
		height: 8px;
		border: 1px solid #222;
		background: linear-gradient(#222, #222) center/6px 1px no-repeat, linear-gradient(#222, #222) center/1px 6px no-repeat, #fff;
	}

	.tdash {
		display: block;
		width: 10px;
		margin-left: 5px;
		border-top: 1px dotted #999;
	}

	.tt {
		word-spacing: -3px;
	}

	.note {
		position: absolute;
		left: 560px;
		top: 498px;
		display: flex;
		flex-direction: column;
		font-size: 18px;
		line-height: 24.500px;
		color: #f00;
		white-space: nowrap;
	}

	.marks {
		position: absolute;
		left: 0;
		top: 0;
		pointer-events: none;
	}
</style>
